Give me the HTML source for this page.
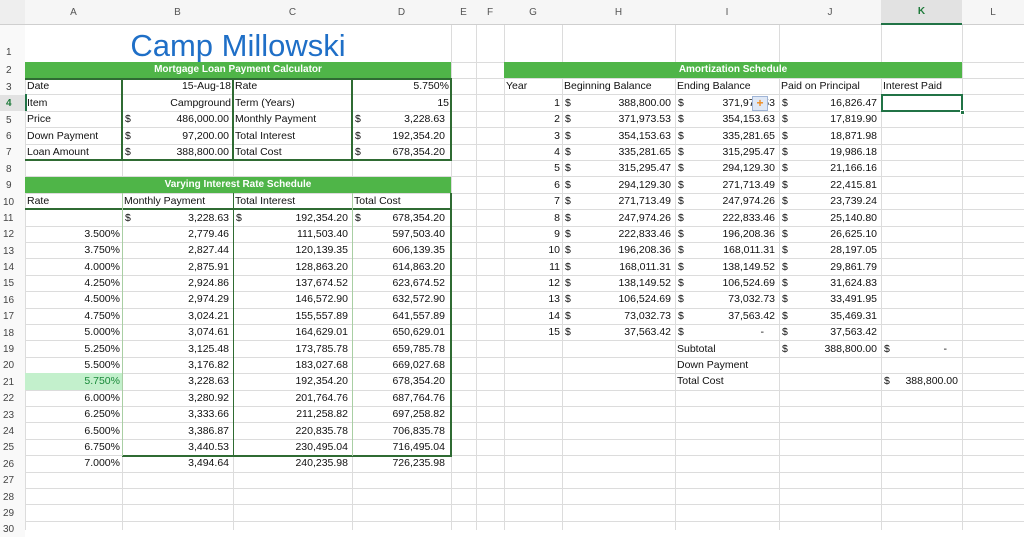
<!DOCTYPE html>
<html><head><meta charset="utf-8"><style>
*{margin:0;padding:0;box-sizing:border-box}
body{width:1024px;height:530px;overflow:hidden;background:#fff;font-family:"Liberation Sans",Arial,sans-serif;font-size:10.5px;color:#111}
#g{position:relative;width:1024px;height:530px;display:grid;
grid-template-columns:25px 97px 111px 119px 99px 25px 28px 58px 113px 104px 102px 81px 62px;
grid-template-rows:25px 37px repeat(29,16.4px)}
.hl{position:absolute;left:0;width:1024px;height:1px;background:#dcdcdc}
.vl{position:absolute;top:0;height:530px;width:1px;background:#dcdcdc}
.ch{grid-row:1;display:flex;align-items:center;justify-content:center;color:#555;font-size:10px;background:#f6f6f6;border-bottom:1px solid #cfcfcf;z-index:1}
.rh{grid-column:1;display:flex;align-items:flex-end;padding-left:6px;color:#444;font-size:10px;background:#f9f9f9;line-height:15px;z-index:1}
.c{white-space:nowrap;line-height:16.4px;padding:0 2px;z-index:2;overflow:visible}
.r{text-align:right}
.m{display:flex;justify-content:space-between;padding:0 4px 0 3px;line-height:16.4px;z-index:2;white-space:nowrap}
.gh{background:#4fb548;color:#fff;font-weight:bold;font-size:10px;text-align:center;line-height:16px;z-index:3}
.bx{position:absolute;z-index:4}
.dk{background:#2f6b33}
.lt{background:#a9cfa4}
</style></head><body>
<div id="g">
<!-- gridlines -->
<div class="hl" style="top:62px"></div><div class="hl" style="top:78px"></div><div class="hl" style="top:94px"></div><div class="hl" style="top:111px"></div><div class="hl" style="top:127px"></div><div class="hl" style="top:144px"></div><div class="hl" style="top:160px"></div><div class="hl" style="top:176px"></div><div class="hl" style="top:193px"></div><div class="hl" style="top:209px"></div><div class="hl" style="top:226px"></div><div class="hl" style="top:242px"></div><div class="hl" style="top:258px"></div><div class="hl" style="top:275px"></div><div class="hl" style="top:291px"></div><div class="hl" style="top:308px"></div><div class="hl" style="top:324px"></div><div class="hl" style="top:340px"></div><div class="hl" style="top:357px"></div><div class="hl" style="top:373px"></div><div class="hl" style="top:390px"></div><div class="hl" style="top:406px"></div><div class="hl" style="top:422px"></div><div class="hl" style="top:439px"></div><div class="hl" style="top:455px"></div><div class="hl" style="top:472px"></div><div class="hl" style="top:488px"></div><div class="hl" style="top:504px"></div><div class="hl" style="top:521px"></div>
<div class="vl" style="left:25px"></div><div class="vl" style="left:122px"></div><div class="vl" style="left:233px"></div><div class="vl" style="left:352px"></div><div class="vl" style="left:451px"></div><div class="vl" style="left:476px"></div><div class="vl" style="left:504px"></div><div class="vl" style="left:562px"></div><div class="vl" style="left:675px"></div><div class="vl" style="left:779px"></div><div class="vl" style="left:881px"></div><div class="vl" style="left:962px"></div>

<!-- column headers -->
<div class="ch" style="grid-column:1;background:#eee"></div>
<div class="ch" style="grid-column:2">A</div><div class="ch" style="grid-column:3">B</div><div class="ch" style="grid-column:4">C</div><div class="ch" style="grid-column:5">D</div><div class="ch" style="grid-column:6">E</div><div class="ch" style="grid-column:7">F</div><div class="ch" style="grid-column:8">G</div><div class="ch" style="grid-column:9">H</div><div class="ch" style="grid-column:10">I</div><div class="ch" style="grid-column:11">J</div><div class="ch" style="grid-column:12;background:#e2e2e2;color:#1e7a3a;font-weight:bold;border-bottom:2px solid #217346">K</div><div class="ch" style="grid-column:13">L</div>

<!-- row headers -->
<div class="rh" style="grid-row:2;padding-bottom:2px">1</div>
<div class="rh" style="grid-row:3">2</div><div class="rh" style="grid-row:4">3</div><div class="rh" style="grid-row:5;color:#1e7a3a;font-weight:bold;background:#e2e2e2">4</div><div class="rh" style="grid-row:6">5</div><div class="rh" style="grid-row:7">6</div><div class="rh" style="grid-row:8">7</div><div class="rh" style="grid-row:9">8</div><div class="rh" style="grid-row:10">9</div><div class="rh" style="grid-row:11;padding-left:3px">10</div><div class="rh" style="grid-row:12;padding-left:3px">11</div><div class="rh" style="grid-row:13;padding-left:3px">12</div><div class="rh" style="grid-row:14;padding-left:3px">13</div><div class="rh" style="grid-row:15;padding-left:3px">14</div><div class="rh" style="grid-row:16;padding-left:3px">15</div><div class="rh" style="grid-row:17;padding-left:3px">16</div><div class="rh" style="grid-row:18;padding-left:3px">17</div><div class="rh" style="grid-row:19;padding-left:3px">18</div><div class="rh" style="grid-row:20;padding-left:3px">19</div><div class="rh" style="grid-row:21;padding-left:3px">20</div><div class="rh" style="grid-row:22;padding-left:3px">21</div><div class="rh" style="grid-row:23;padding-left:3px">22</div><div class="rh" style="grid-row:24;padding-left:3px">23</div><div class="rh" style="grid-row:25;padding-left:3px">24</div><div class="rh" style="grid-row:26;padding-left:3px">25</div><div class="rh" style="grid-row:27;padding-left:3px">26</div><div class="rh" style="grid-row:28;padding-left:3px">27</div><div class="rh" style="grid-row:29;padding-left:3px">28</div><div class="rh" style="grid-row:30;padding-left:3px">29</div><div class="rh" style="grid-row:31;padding-left:3px">30</div>

<!-- title -->
<div style="grid-row:2;grid-column:2/6;text-align:center;color:#1f6fc7;font-size:31px;line-height:37px;padding-top:2px;z-index:3;background:#fff">Camp Millowski</div>

<!-- top table -->
<div class="gh" style="grid-row:3;grid-column:2/6">Mortgage Loan Payment Calculator</div>
<div class="c" style="grid-row:4;grid-column:2">Date</div><div class="c r" style="grid-row:4;grid-column:3">15-Aug-18</div><div class="c" style="grid-row:4;grid-column:4">Rate</div><div class="c r" style="grid-row:4;grid-column:5">5.750%</div>
<div class="c" style="grid-row:5;grid-column:2">Item</div><div class="c r" style="grid-row:5;grid-column:3">Campground</div><div class="c" style="grid-row:5;grid-column:4">Term (Years)</div><div class="c r" style="grid-row:5;grid-column:5">15</div>
<div class="c" style="grid-row:6;grid-column:2">Price</div><div class="m" style="grid-row:6;grid-column:3"><span>$</span><span>486,000.00</span></div><div class="c" style="grid-row:6;grid-column:4">Monthly Payment</div><div class="m" style="grid-row:6;grid-column:5;padding-right:6px"><span>$</span><span>3,228.63</span></div>
<div class="c" style="grid-row:7;grid-column:2">Down Payment</div><div class="m" style="grid-row:7;grid-column:3"><span>$</span><span>97,200.00</span></div><div class="c" style="grid-row:7;grid-column:4">Total Interest</div><div class="m" style="grid-row:7;grid-column:5;padding-right:6px"><span>$</span><span>192,354.20</span></div>
<div class="c" style="grid-row:8;grid-column:2">Loan Amount</div><div class="m" style="grid-row:8;grid-column:3"><span>$</span><span>388,800.00</span></div><div class="c" style="grid-row:8;grid-column:4">Total Cost</div><div class="m" style="grid-row:8;grid-column:5;padding-right:6px"><span>$</span><span>678,354.20</span></div>

<!-- varying table -->
<div class="gh" style="grid-row:10;grid-column:2/6">Varying Interest Rate Schedule</div>
<div class="c" style="grid-row:11;grid-column:2">Rate</div><div class="c" style="grid-row:11;grid-column:3">Monthly Payment</div><div class="c" style="grid-row:11;grid-column:4">Total Interest</div><div class="c" style="grid-row:11;grid-column:5">Total Cost</div>
<div class="m" style="grid-row:12;grid-column:3"><span>$</span><span>3,228.63</span></div><div class="m" style="grid-row:12;grid-column:4"><span>$</span><span>192,354.20</span></div><div class="m" style="grid-row:12;grid-column:5;padding-right:6px"><span>$</span><span>678,354.20</span></div>

<div class="c r" style="grid-row:13;grid-column:2">3.500%</div><div class="c r" style="grid-row:13;grid-column:3;padding-right:4px">2,779.46</div><div class="c r" style="grid-row:13;grid-column:4;padding-right:4px">111,503.40</div><div class="c r" style="grid-row:13;grid-column:5;padding-right:6px">597,503.40</div>
<div class="c r" style="grid-row:14;grid-column:2">3.750%</div><div class="c r" style="grid-row:14;grid-column:3;padding-right:4px">2,827.44</div><div class="c r" style="grid-row:14;grid-column:4;padding-right:4px">120,139.35</div><div class="c r" style="grid-row:14;grid-column:5;padding-right:6px">606,139.35</div>
<div class="c r" style="grid-row:15;grid-column:2">4.000%</div><div class="c r" style="grid-row:15;grid-column:3;padding-right:4px">2,875.91</div><div class="c r" style="grid-row:15;grid-column:4;padding-right:4px">128,863.20</div><div class="c r" style="grid-row:15;grid-column:5;padding-right:6px">614,863.20</div>
<div class="c r" style="grid-row:16;grid-column:2">4.250%</div><div class="c r" style="grid-row:16;grid-column:3;padding-right:4px">2,924.86</div><div class="c r" style="grid-row:16;grid-column:4;padding-right:4px">137,674.52</div><div class="c r" style="grid-row:16;grid-column:5;padding-right:6px">623,674.52</div>
<div class="c r" style="grid-row:17;grid-column:2">4.500%</div><div class="c r" style="grid-row:17;grid-column:3;padding-right:4px">2,974.29</div><div class="c r" style="grid-row:17;grid-column:4;padding-right:4px">146,572.90</div><div class="c r" style="grid-row:17;grid-column:5;padding-right:6px">632,572.90</div>
<div class="c r" style="grid-row:18;grid-column:2">4.750%</div><div class="c r" style="grid-row:18;grid-column:3;padding-right:4px">3,024.21</div><div class="c r" style="grid-row:18;grid-column:4;padding-right:4px">155,557.89</div><div class="c r" style="grid-row:18;grid-column:5;padding-right:6px">641,557.89</div>
<div class="c r" style="grid-row:19;grid-column:2">5.000%</div><div class="c r" style="grid-row:19;grid-column:3;padding-right:4px">3,074.61</div><div class="c r" style="grid-row:19;grid-column:4;padding-right:4px">164,629.01</div><div class="c r" style="grid-row:19;grid-column:5;padding-right:6px">650,629.01</div>
<div class="c r" style="grid-row:20;grid-column:2">5.250%</div><div class="c r" style="grid-row:20;grid-column:3;padding-right:4px">3,125.48</div><div class="c r" style="grid-row:20;grid-column:4;padding-right:4px">173,785.78</div><div class="c r" style="grid-row:20;grid-column:5;padding-right:6px">659,785.78</div>
<div class="c r" style="grid-row:21;grid-column:2">5.500%</div><div class="c r" style="grid-row:21;grid-column:3;padding-right:4px">3,176.82</div><div class="c r" style="grid-row:21;grid-column:4;padding-right:4px">183,027.68</div><div class="c r" style="grid-row:21;grid-column:5;padding-right:6px">669,027.68</div>
<div class="c r" style="grid-row:22;grid-column:2;background:#c3f0cc;color:#1a8a3a">5.750%</div><div class="c r" style="grid-row:22;grid-column:3;padding-right:4px">3,228.63</div><div class="c r" style="grid-row:22;grid-column:4;padding-right:4px">192,354.20</div><div class="c r" style="grid-row:22;grid-column:5;padding-right:6px">678,354.20</div>
<div class="c r" style="grid-row:23;grid-column:2">6.000%</div><div class="c r" style="grid-row:23;grid-column:3;padding-right:4px">3,280.92</div><div class="c r" style="grid-row:23;grid-column:4;padding-right:4px">201,764.76</div><div class="c r" style="grid-row:23;grid-column:5;padding-right:6px">687,764.76</div>
<div class="c r" style="grid-row:24;grid-column:2">6.250%</div><div class="c r" style="grid-row:24;grid-column:3;padding-right:4px">3,333.66</div><div class="c r" style="grid-row:24;grid-column:4;padding-right:4px">211,258.82</div><div class="c r" style="grid-row:24;grid-column:5;padding-right:6px">697,258.82</div>
<div class="c r" style="grid-row:25;grid-column:2">6.500%</div><div class="c r" style="grid-row:25;grid-column:3;padding-right:4px">3,386.87</div><div class="c r" style="grid-row:25;grid-column:4;padding-right:4px">220,835.78</div><div class="c r" style="grid-row:25;grid-column:5;padding-right:6px">706,835.78</div>
<div class="c r" style="grid-row:26;grid-column:2">6.750%</div><div class="c r" style="grid-row:26;grid-column:3;padding-right:4px">3,440.53</div><div class="c r" style="grid-row:26;grid-column:4;padding-right:4px">230,495.04</div><div class="c r" style="grid-row:26;grid-column:5;padding-right:6px">716,495.04</div>
<div class="c r" style="grid-row:27;grid-column:2">7.000%</div><div class="c r" style="grid-row:27;grid-column:3;padding-right:4px">3,494.64</div><div class="c r" style="grid-row:27;grid-column:4;padding-right:4px">240,235.98</div><div class="c r" style="grid-row:27;grid-column:5;padding-right:6px">726,235.98</div>

<!-- amortization -->
<div class="gh" style="grid-row:3;grid-column:8/13">Amortization Schedule</div>
<div class="c" style="grid-row:4;grid-column:8">Year</div><div class="c" style="grid-row:4;grid-column:9">Beginning Balance</div><div class="c" style="grid-row:4;grid-column:10">Ending Balance</div><div class="c" style="grid-row:4;grid-column:11">Paid on Principal</div><div class="c" style="grid-row:4;grid-column:12">Interest Paid</div>

<div class="c r" style="grid-row:5;grid-column:8">1</div><div class="m" style="grid-row:5;grid-column:9"><span>$</span><span>388,800.00</span></div><div class="m" style="grid-row:5;grid-column:10"><span>$</span><span>371,973.53</span></div><div class="m" style="grid-row:5;grid-column:11"><span>$</span><span>16,826.47</span></div>
<div class="c r" style="grid-row:6;grid-column:8">2</div><div class="m" style="grid-row:6;grid-column:9"><span>$</span><span>371,973.53</span></div><div class="m" style="grid-row:6;grid-column:10"><span>$</span><span>354,153.63</span></div><div class="m" style="grid-row:6;grid-column:11"><span>$</span><span>17,819.90</span></div>
<div class="c r" style="grid-row:7;grid-column:8">3</div><div class="m" style="grid-row:7;grid-column:9"><span>$</span><span>354,153.63</span></div><div class="m" style="grid-row:7;grid-column:10"><span>$</span><span>335,281.65</span></div><div class="m" style="grid-row:7;grid-column:11"><span>$</span><span>18,871.98</span></div>
<div class="c r" style="grid-row:8;grid-column:8">4</div><div class="m" style="grid-row:8;grid-column:9"><span>$</span><span>335,281.65</span></div><div class="m" style="grid-row:8;grid-column:10"><span>$</span><span>315,295.47</span></div><div class="m" style="grid-row:8;grid-column:11"><span>$</span><span>19,986.18</span></div>
<div class="c r" style="grid-row:9;grid-column:8">5</div><div class="m" style="grid-row:9;grid-column:9"><span>$</span><span>315,295.47</span></div><div class="m" style="grid-row:9;grid-column:10"><span>$</span><span>294,129.30</span></div><div class="m" style="grid-row:9;grid-column:11"><span>$</span><span>21,166.16</span></div>
<div class="c r" style="grid-row:10;grid-column:8">6</div><div class="m" style="grid-row:10;grid-column:9"><span>$</span><span>294,129.30</span></div><div class="m" style="grid-row:10;grid-column:10"><span>$</span><span>271,713.49</span></div><div class="m" style="grid-row:10;grid-column:11"><span>$</span><span>22,415.81</span></div>
<div class="c r" style="grid-row:11;grid-column:8">7</div><div class="m" style="grid-row:11;grid-column:9"><span>$</span><span>271,713.49</span></div><div class="m" style="grid-row:11;grid-column:10"><span>$</span><span>247,974.26</span></div><div class="m" style="grid-row:11;grid-column:11"><span>$</span><span>23,739.24</span></div>
<div class="c r" style="grid-row:12;grid-column:8">8</div><div class="m" style="grid-row:12;grid-column:9"><span>$</span><span>247,974.26</span></div><div class="m" style="grid-row:12;grid-column:10"><span>$</span><span>222,833.46</span></div><div class="m" style="grid-row:12;grid-column:11"><span>$</span><span>25,140.80</span></div>
<div class="c r" style="grid-row:13;grid-column:8">9</div><div class="m" style="grid-row:13;grid-column:9"><span>$</span><span>222,833.46</span></div><div class="m" style="grid-row:13;grid-column:10"><span>$</span><span>196,208.36</span></div><div class="m" style="grid-row:13;grid-column:11"><span>$</span><span>26,625.10</span></div>
<div class="c r" style="grid-row:14;grid-column:8">10</div><div class="m" style="grid-row:14;grid-column:9"><span>$</span><span>196,208.36</span></div><div class="m" style="grid-row:14;grid-column:10"><span>$</span><span>168,011.31</span></div><div class="m" style="grid-row:14;grid-column:11"><span>$</span><span>28,197.05</span></div>
<div class="c r" style="grid-row:15;grid-column:8">11</div><div class="m" style="grid-row:15;grid-column:9"><span>$</span><span>168,011.31</span></div><div class="m" style="grid-row:15;grid-column:10"><span>$</span><span>138,149.52</span></div><div class="m" style="grid-row:15;grid-column:11"><span>$</span><span>29,861.79</span></div>
<div class="c r" style="grid-row:16;grid-column:8">12</div><div class="m" style="grid-row:16;grid-column:9"><span>$</span><span>138,149.52</span></div><div class="m" style="grid-row:16;grid-column:10"><span>$</span><span>106,524.69</span></div><div class="m" style="grid-row:16;grid-column:11"><span>$</span><span>31,624.83</span></div>
<div class="c r" style="grid-row:17;grid-column:8">13</div><div class="m" style="grid-row:17;grid-column:9"><span>$</span><span>106,524.69</span></div><div class="m" style="grid-row:17;grid-column:10"><span>$</span><span>73,032.73</span></div><div class="m" style="grid-row:17;grid-column:11"><span>$</span><span>33,491.95</span></div>
<div class="c r" style="grid-row:18;grid-column:8">14</div><div class="m" style="grid-row:18;grid-column:9"><span>$</span><span>73,032.73</span></div><div class="m" style="grid-row:18;grid-column:10"><span>$</span><span>37,563.42</span></div><div class="m" style="grid-row:18;grid-column:11"><span>$</span><span>35,469.31</span></div>
<div class="c r" style="grid-row:19;grid-column:8">15</div><div class="m" style="grid-row:19;grid-column:9"><span>$</span><span>37,563.42</span></div><div class="m" style="grid-row:19;grid-column:10;padding-right:15px"><span>$</span><span>-</span></div><div class="m" style="grid-row:19;grid-column:11"><span>$</span><span>37,563.42</span></div>
<div class="c" style="grid-row:20;grid-column:10">Subtotal</div><div class="m" style="grid-row:20;grid-column:11"><span>$</span><span>388,800.00</span></div><div class="m" style="grid-row:20;grid-column:12;padding-right:15px"><span>$</span><span>-</span></div>
<div class="c" style="grid-row:21;grid-column:10">Down Payment</div>
<div class="c" style="grid-row:22;grid-column:10">Total Cost</div><div class="m" style="grid-row:22;grid-column:12"><span>$</span><span>388,800.00</span></div>

<!-- borders top table -->
<div class="bx dk" style="left:25px;top:78px;width:427px;height:2px"></div>
<div class="bx dk" style="left:25px;top:159px;width:427px;height:2px"></div>
<div class="bx dk" style="left:121px;top:78px;width:2px;height:83px"></div>
<div class="bx dk" style="left:232px;top:78px;width:2px;height:83px"></div>
<div class="bx dk" style="left:351px;top:78px;width:2px;height:83px"></div>
<div class="bx dk" style="left:450px;top:78px;width:2px;height:83px"></div>
<div class="bx" style="left:25px;top:94px;width:2px;height:17px;background:#217346"></div>
<!-- borders lower table -->
<div class="bx dk" style="left:25px;top:208px;width:427px;height:2px"></div>
<div class="bx dk" style="left:122px;top:455px;width:330px;height:2px"></div>
<div class="bx lt" style="left:122px;top:193px;width:1px;height:263px"></div>
<div class="bx dk" style="left:233px;top:193px;width:1px;height:263px"></div>
<div class="bx lt" style="left:352px;top:193px;width:1px;height:263px"></div>
<div class="bx dk" style="left:450px;top:193px;width:2px;height:263px"></div>
<!-- selection K4 -->
<div class="bx" style="left:881px;top:94px;width:82px;height:18px;border:2px solid #217346"></div>
<div class="bx" style="left:960px;top:110px;width:5px;height:5px;background:#217346;border:1px solid #fff"></div>
<!-- autofill icon -->
<div class="bx" style="left:752px;top:96px;width:16px;height:15px;background:#dfe8f6;border:1px solid #9fb4d6;color:#f08a1c;font-weight:bold;font-size:12px;line-height:13px;text-align:center">+</div>
</div>
</body></html>
